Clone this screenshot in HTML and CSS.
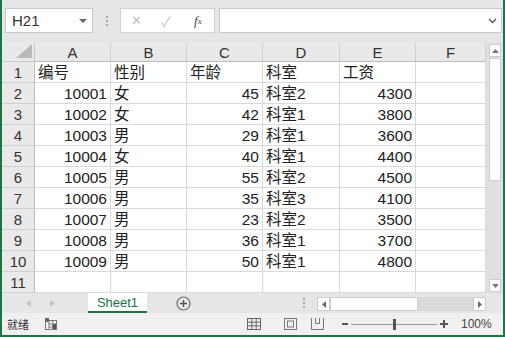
FILE: index.html
```html
<!DOCTYPE html>
<html lang="zh">
<head>
<meta charset="utf-8">
<link rel="stylesheet" href="styles.css">
</head>
<body>
<div class="app">
  <div class="fbar">
    <div class="namebox"><span>H21</span><svg class="dd" width="8" height="5" viewBox="0 0 8 5"><path d="M0 0h8L4 4z" fill="#666"/></svg></div>
    <div class="vdots"><i></i><i></i><i></i></div>
    <div class="fxbtns">
      <span class="fxb x">✕</span>
      <span class="fxb ok">✓</span>
      <span class="fxb fx"><i>f</i><sub>x</sub></span>
    </div>
    <div class="finput"><svg width="9" height="6" viewBox="0 0 9 6"><path d="M1 1l3.5 3.5L8 1" stroke="#555" stroke-width="1.3" fill="none"/></svg></div>
  </div>

  <div class="sheet">
    <div class="grid">
      <div class="corner"><svg width="16" height="14" viewBox="0 0 16 14"><path d="M16 0V14H0z" fill="#b9b9b9"/></svg></div>
      <div class="ch">A</div><div class="ch">B</div><div class="ch">C</div><div class="ch">D</div><div class="ch">E</div><div class="ch">F</div>

      <div class="rh">1</div><div class="c">编号</div><div class="c">性别</div><div class="c">年龄</div><div class="c">科室</div><div class="c">工资</div><div class="c"></div>
      <div class="rh">2</div><div class="c n">10001</div><div class="c">女</div><div class="c n">45</div><div class="c">科室2</div><div class="c n">4300</div><div class="c"></div>
      <div class="rh">3</div><div class="c n">10002</div><div class="c">女</div><div class="c n">42</div><div class="c">科室1</div><div class="c n">3800</div><div class="c"></div>
      <div class="rh">4</div><div class="c n">10003</div><div class="c">男</div><div class="c n">29</div><div class="c">科室1</div><div class="c n">3600</div><div class="c"></div>
      <div class="rh">5</div><div class="c n">10004</div><div class="c">女</div><div class="c n">40</div><div class="c">科室1</div><div class="c n">4400</div><div class="c"></div>
      <div class="rh">6</div><div class="c n">10005</div><div class="c">男</div><div class="c n">55</div><div class="c">科室2</div><div class="c n">4500</div><div class="c"></div>
      <div class="rh">7</div><div class="c n">10006</div><div class="c">男</div><div class="c n">35</div><div class="c">科室3</div><div class="c n">4100</div><div class="c"></div>
      <div class="rh">8</div><div class="c n">10007</div><div class="c">男</div><div class="c n">23</div><div class="c">科室2</div><div class="c n">3500</div><div class="c"></div>
      <div class="rh">9</div><div class="c n">10008</div><div class="c">男</div><div class="c n">36</div><div class="c">科室1</div><div class="c n">3700</div><div class="c"></div>
      <div class="rh">10</div><div class="c n">10009</div><div class="c">男</div><div class="c n">50</div><div class="c">科室1</div><div class="c n">4800</div><div class="c"></div>
      <div class="rh">11</div><div class="c"></div><div class="c"></div><div class="c"></div><div class="c"></div><div class="c"></div><div class="c"></div>
    </div>
    <div class="vscroll">
      <div class="sbtn"><svg width="7" height="4" viewBox="0 0 7 4"><path d="M0 4h7L3.5 0z" fill="#777"/></svg></div>
      <div class="vthumb"></div>
      <div class="vtrack"></div>
      <div class="sbtn"><svg width="7" height="4" viewBox="0 0 7 4"><path d="M0 0h7L3.5 4z" fill="#777"/></svg></div>
    </div>
  </div>

  <div class="tabbar">
    <div class="nav">
      <svg width="5" height="7" viewBox="0 0 5 7"><path d="M5 0v7L0 3.5z" fill="#c4c4c4"/></svg>
      <svg width="5" height="7" viewBox="0 0 5 7"><path d="M0 0v7L5 3.5z" fill="#c4c4c4"/></svg>
    </div>
    <div class="tab">Sheet1</div>
    <div class="add"><svg width="15" height="15" viewBox="0 0 15 15"><circle cx="7.5" cy="7.5" r="6.5" fill="none" stroke="#6a6a6a" stroke-width="1.2"/><path d="M7.5 4v7M4 7.5h7" stroke="#555" stroke-width="1.4"/></svg></div>
    <div class="vdots small"><i></i><i></i><i></i></div>
    <div class="hscroll">
      <div class="hbtn"><svg width="4" height="7" viewBox="0 0 4 7"><path d="M4 0v7L0 3.5z" fill="#666"/></svg></div>
      <div class="hthumb"></div>
      <div class="htrack"></div>
      <div class="hbtn"><svg width="4" height="7" viewBox="0 0 4 7"><path d="M0 0v7L4 3.5z" fill="#666"/></svg></div>
    </div>
  </div>

  <div class="status">
    <span class="ready">就绪</span>
    <svg class="macro" width="12" height="12" viewBox="0 0 12 12"><rect x="0.5" y="2.5" width="11" height="9" fill="none" stroke="#777"/><rect x="0" y="0" width="4" height="4" fill="#666"/><path d="M3 6h8M3 9h8M4 3v9M7.5 3v9" stroke="#888" stroke-width="1"/><rect x="8" y="6" width="3" height="5" fill="#555"/></svg>
    <div class="views">
      <svg class="vw active" width="14" height="12" viewBox="0 0 14 12"><rect x="0.5" y="0.5" width="13" height="11" fill="none" stroke="#666"/><path d="M0 4.2h14M0 7.8h14M4.8 0v12M9.2 0v12" stroke="#666"/></svg>
      <svg class="vw" width="13" height="12" viewBox="0 0 13 12"><rect x="0.5" y="0.5" width="12" height="11" fill="none" stroke="#777"/><rect x="3.5" y="3" width="6" height="6" fill="none" stroke="#777"/></svg>
      <svg class="vw" width="13" height="12" viewBox="0 0 13 12"><path d="M0.5 0v11.5h12V0M4.5 0v5.5h4V0" fill="none" stroke="#777"/></svg>
    </div>
    <div class="zoom">
      <span class="minus"></span>
      <div class="slider"><span class="thumb"></span></div>
      <span class="plus"></span>
    </div>
    <span class="pct">100%</span>
  </div>
</div>
</body>
</html>
```

FILE: styles.css
```css
* { box-sizing: border-box; }
html, body { margin: 0; padding: 0; }
body { width: 505px; height: 337px; overflow: hidden; background: #fff; font-family: "Liberation Sans", "Noto Sans CJK SC", sans-serif; }

.app {
  width: 505px; height: 337px;
  border-left: 2px solid #217346;
  border-right: 2px solid #217346;
  border-bottom: 2px solid #217346;
  display: flex; flex-direction: column;
  background: #e6e6e6;
}

/* formula bar */
.fbar { height: 43px; display: flex; align-items: flex-start; padding: 8px 1px 0 3px; background: #e6e6e6; }
.namebox {
  width: 88px; height: 25px; background: #fff; border: 1px solid #c8c8c8;
  display: flex; align-items: center; justify-content: space-between; padding: 0 5px 0 6px;
  font-size: 15px; color: #333;
}
.namebox .dd { margin-top: 1px; }
.vdots { width: 27px; height: 25px; display: flex; flex-direction: column; align-items: center; justify-content: center; gap: 2px; }
.vdots i { width: 2px; height: 2px; background: #a8a8a8; display: block; }
.fxbtns {
  width: 95px; height: 25px; background: #fff; border: 1px solid #d2d2d2;
  display: flex; align-items: center; padding-left: 9px;
}
.fxb { display: flex; align-items: center; justify-content: center; color: #c2c2c2; }
.fxb.x { width: 13px; font-size: 13px; margin-right: 16px; }
.fxb.ok { width: 14px; font-size: 14px; margin-right: 21px; }
.fxb.fx { color: #444; font-family: "Liberation Serif", serif; font-size: 13px; }
.fxb.fx sub { font-size: 9px; font-style: italic; vertical-align: -2px; }
.finput {
  flex: 1; margin-left: 4px; height: 25px; background: #fff; border: 1px solid #c8c8c8;
  display: flex; align-items: center; justify-content: flex-end; padding-right: 4px;
}

/* sheet */
.sheet { height: 250px; display: flex; }
.grid {
  display: grid;
  grid-template-columns: 33px 76px 76px 76px 77px 76px 70px;
  grid-template-rows: 19px repeat(11, 21px);
  background: #fff;
}
.corner { background: #e9e9e9; border-right: 1px solid #c8c8c8; border-bottom: 1px solid #c8c8c8; display: flex; align-items: flex-end; justify-content: flex-end; padding: 0 2px 3px 0; }
.ch {
  background: #e9e9e9; border-right: 1px solid #cfcfcf; border-bottom: 1px solid #bdbdbd;
  font-size: 15px; color: #333; display: flex; align-items: center; justify-content: center; padding-top: 1px;
}
.rh {
  background: #e9e9e9; border-right: 1px solid #bdbdbd; border-bottom: 1px solid #cfcfcf;
  font-size: 15px; color: #333; display: flex; align-items: center; justify-content: center; padding-top: 1px;
}
.c {
  border-right: 1px solid #dadada; border-bottom: 1px solid #dadada;
  font-size: 15.5px; color: #222; display: flex; align-items: flex-end; padding: 0 3px 0 3px; line-height: 19px;
  white-space: nowrap; overflow: visible;
}
.c.n { justify-content: flex-end; }

.vscroll { width: 17px; background: #e0e0e0; display: flex; flex-direction: column; padding: 1px 2px 1px 3px; }
.sbtn { height: 13px; background: #fff; border: 1px solid #cdcdcd; display: flex; align-items: center; justify-content: center; }
.vthumb { height: 123px; background: #fff; border: 1px solid #cdcdcd; margin-top: 1px; }
.vtrack { flex: 1; }

/* tab bar */
.tabbar { height: 20px; display: flex; align-items: stretch; background: #e6e6e6; }
.nav { width: 86px; display: flex; align-items: center; padding-left: 24px; gap: 19px; }
.tab {
  width: 59px; background: #fff; color: #217346; font-size: 13px;
  display: flex; align-items: center; justify-content: center; border-bottom: 2px solid #217346; padding-top: 1px;
}
.add { width: 71px; display: flex; align-items: center; justify-content: center; padding-left: 1px; }
.vdots.small { width: 99px; height: 20px; padding-left: 85px; align-items: flex-start; }
.hscroll { width: 169px; height: 14px; margin-top: 4px; display: flex; background: #d9d9d9; }
.hbtn { width: 13px; background: #fff; border: 1px solid #cdcdcd; display: flex; align-items: center; justify-content: center; }
.hthumb { width: 88px; background: #fff; border: 1px solid #cdcdcd; }
.htrack { flex: 1; }

/* status */
.status { height: 22px; display: flex; align-items: center; background: #f0f0f0; font-size: 11px; color: #333; padding-left: 5px; }
.ready { font-family: "Noto Sans CJK SC", sans-serif; font-size: 11px; }
.macro { margin-left: 16px; }
.views { display: flex; align-items: center; margin-left: 190px; gap: 23px; }
.views svg:nth-child(3) { margin-left: -9px; }
.zoom { display: flex; align-items: center; margin-left: 18px; }
.minus { width: 6px; height: 2px; background: #555; }
.slider { width: 86px; height: 1px; background: #999; margin: 0 3px; position: relative; }
.slider .thumb { position: absolute; left: 42px; top: -5px; width: 3px; height: 11px; background: #555; }
.plus { width: 8px; height: 8px; position: relative; }
.plus::before { content: ""; position: absolute; left: 0; top: 3px; width: 8px; height: 2px; background: #555; }
.plus::after { content: ""; position: absolute; left: 3px; top: 0; width: 2px; height: 8px; background: #555; }
.pct { margin-left: 13px; font-size: 12px; color: #444; }
```
